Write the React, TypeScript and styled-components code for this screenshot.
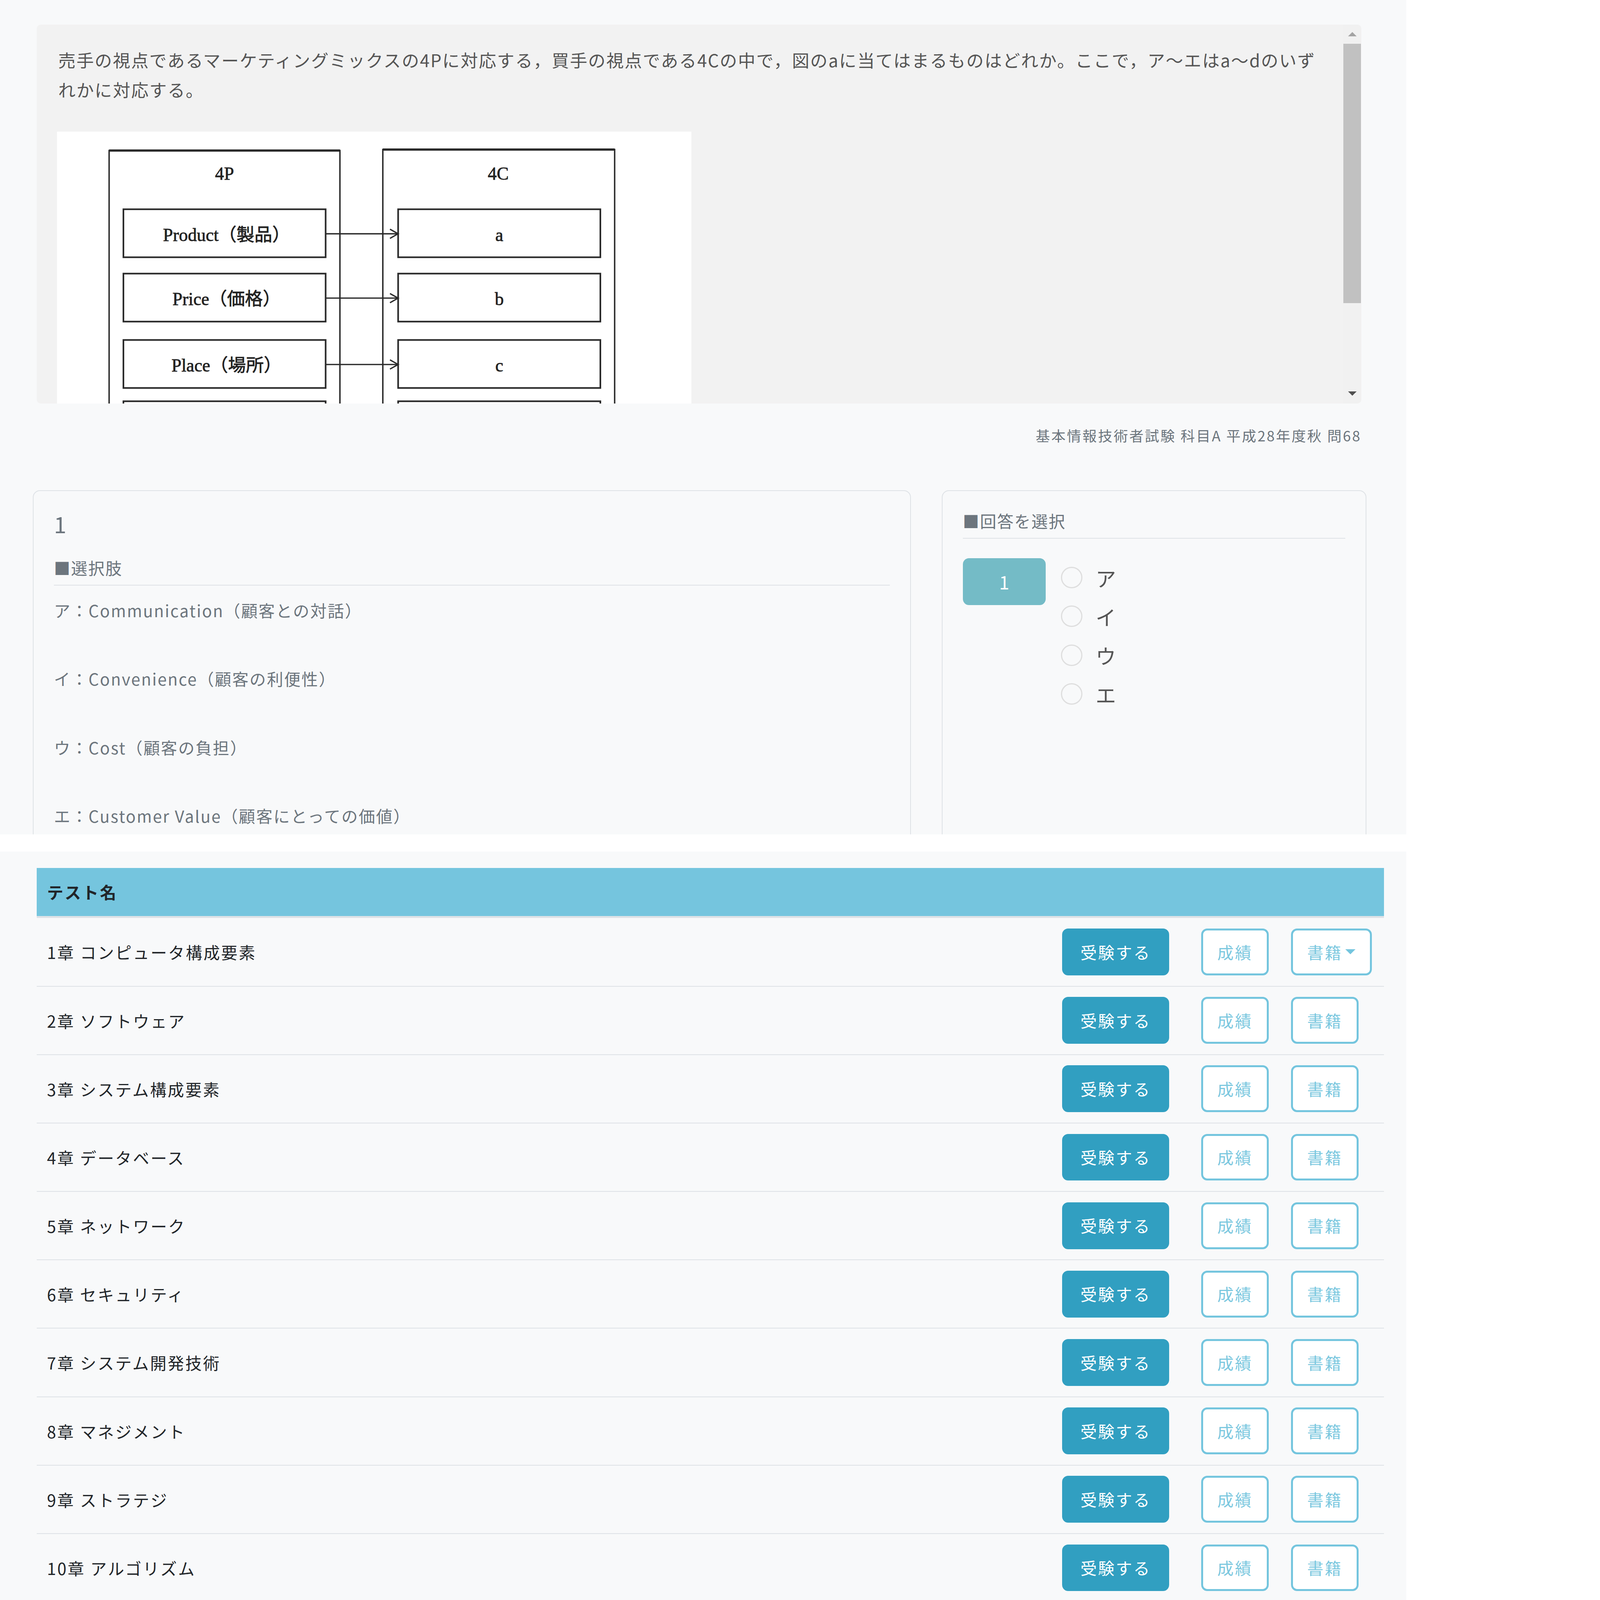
import React from 'react'
import styled, { createGlobalStyle } from 'styled-components'

const GlobalStyle = createGlobalStyle`
  html, body {
    margin: 0;
    padding: 0;
    background: #fff;
  }
  body {
    font-family: "Noto Sans CJK JP", "Noto Sans", sans-serif;
  }
  * {
    box-sizing: border-box;
  }
`

// the frame is photographed at a high pixel ratio; lay out in 1377px-wide units
const Page = styled.div`
  zoom: 2.6145;
  width: 1377px;
  height: 1569px;
  overflow: hidden;
  background: #fff;
  letter-spacing: 0.08em;
`

// ---- question area ----

const QuestionSection = styled.section`
  height: 817px;
  overflow: hidden;
  background: #f8f9fa;
  padding: 24px 0 0 36px;
`

const QuestionBox = styled.div`
  display: flex;
  width: 1297px;
  height: 371px;
  background: #f2f2f2;
  border-radius: 4px;
  overflow: hidden;
`

const QuestionBody = styled.div`
  flex: 1;
  overflow: hidden;
  padding: 20px 20px 0 21px;
`

const QuestionText = styled.p`
  margin: 0 0 27px;
  font-size: 17px;
  line-height: 29px;
  letter-spacing: 0.05em;
  color: #555;
`

const Figure = styled.div`
  width: 621px;
  height: 340px;
  margin-left: -1px;
  background: #fff;
  letter-spacing: 0;
`

const ScrollTrack = styled.div`
  width: 18px;
  display: flex;
  flex-direction: column;
  align-items: center;
  background: #f1f1f1;
`

const ScrollButton = styled.div`
  height: 19px;
  width: 100%;
  display: flex;
  align-items: center;
  justify-content: center;
`

const Triangle = styled.span<{ $dir: 'up' | 'down' }>`
  width: 0;
  height: 0;
  border-left: 4.5px solid transparent;
  border-right: 4.5px solid transparent;
  ${(p) =>
    p.$dir === 'up'
      ? 'border-bottom: 4.5px solid #a3a3a3;'
      : 'border-top: 4.5px solid #505050;'}
`

const ScrollThumb = styled.div`
  width: 17px;
  height: 254px;
  background: #c1c1c1;
`

const ScrollSpacer = styled.div`
  flex: 1;
`

const Source = styled.p`
  margin: 21px 0 0;
  width: 1297px;
  text-align: right;
  font-size: 14px;
  line-height: 21px;
  color: #6c757d;
`

const CardRow = styled.div`
  display: flex;
  gap: 30px;
  margin: 43px 0 0 -4px;
`

const Card = styled.div<{ $width: number }>`
  width: ${(p) => p.$width}px;
  height: 420px;
  border: 1px solid #dee2e6;
  border-radius: 7px;
  padding: 16px 20px;
  color: #6c757d;
`

const QuestionNo = styled.div`
  font-size: 22px;
  line-height: 32px;
`

const CardTitle = styled.div<{ $gap?: number }>`
  margin-top: ${(p) => p.$gap ?? 0}px;
  font-size: 16px;
  line-height: 26px;
  padding-bottom: 4px;
  border-bottom: 1px solid #dee2e6;
  letter-spacing: 0.05em;
`

const Choices = styled.div`
  margin-top: 11px;
`

const Choice = styled.p`
  margin: 0 0 41px;
  font-size: 16px;
  line-height: 26px;
  letter-spacing: 0.06em;
`

const AnswerArea = styled.div`
  display: flex;
  align-items: flex-start;
  margin-top: 19px;
`

const AnswerNo = styled.div`
  width: 81px;
  height: 46px;
  border-radius: 6px;
  background: #74bbc6;
  color: #fff;
  font-size: 18px;
  display: flex;
  align-items: center;
  justify-content: center;
  letter-spacing: 0;
`

const RadioList = styled.div`
  margin-left: 15px;
  display: flex;
  flex-direction: column;
`

const RadioItem = styled.label`
  height: 38px;
  display: flex;
  align-items: center;
`

const RadioCircle = styled.span`
  width: 21px;
  height: 21px;
  border-radius: 50%;
  border: 1.5px solid #dedede;
`

const RadioLabel = styled.span`
  margin-left: 13px;
  font-size: 20px;
  color: #555;
`

// ---- test list ----

const Divider = styled.div`
  height: 17px;
  background: #fff;
`

const ListSection = styled.section`
  height: 735px;
  overflow: hidden;
  background: #f8f9fa;
  padding: 16px 0 0 36px;
`

const Table = styled.div`
  width: 1319px;
`

const HeadRow = styled.div`
  height: 49px;
  padding-left: 10px;
  background: #75c5de;
  border-bottom: 2px solid #dee2e6;
  font-size: 16px;
  font-weight: 700;
  line-height: 47px;
  color: #212529;
`

const Row = styled.div`
  display: grid;
  grid-template-columns: 1fr 136px 88px 101px;
  align-items: center;
  height: 67px;
  border-bottom: 1px solid #dee2e6;
`

const Cell = styled.div`
  padding-left: 10px;
  font-size: 16px;
  color: #212529;
`

const Button = styled.button<{ $variant: 'solid' | 'outline' }>`
  font-family: inherit;
  font-size: 16px;
  line-height: 24px;
  letter-spacing: 0.08em;
  border-radius: 6px;
  cursor: pointer;
  display: inline-flex;
  align-items: center;
  ${(p) =>
    p.$variant === 'solid'
      ? `
    padding: 9px 16px;
    background: #319fc1;
    border: 2px solid #319fc1;
    color: #fff;
  `
      : `
    padding: 9px 14px;
    background: #fff;
    border: 2px solid #74c5de;
    color: #7cc8df;
  `}
`

const Caret = styled.span`
  display: inline-block;
  margin-left: 3px;
  width: 0;
  height: 0;
  border-top: 5px solid #74c5de;
  border-left: 5px solid transparent;
  border-right: 5px solid transparent;
`

// only the first three rows of the figure are in view; the fourth shows its top edge
const rows4P = [
  ['Product（製品）', 'a'],
  ['Price（価格）', 'b'],
  ['Place（場所）', 'c'],
]

const rowTops = [76, 139, 204, 264]

const Diagram = () => (
  <svg width="621" height="340" viewBox="0 0 621 340">
    <g fill="none" stroke="#2a2a2a">
      <rect x="51" y="18.5" width="226" height="400" strokeWidth="1.4" />
      <rect x="319" y="17.5" width="227" height="400" strokeWidth="1.4" />
      <line x1="51" y1="18.5" x2="277" y2="18.5" strokeWidth="2.2" />
      <line x1="319" y1="17.5" x2="546" y2="17.5" strokeWidth="2.2" />
      {rowTops.map((top) => (
        <g key={top}>
          <rect x="65" y={top} width="198" height="47" strokeWidth="1.6" />
          <rect x="334" y={top} width="198" height="47" strokeWidth="1.6" />
          <line x1="263" y1={top + 24} x2="333" y2={top + 24} strokeWidth="1.3" />
          <path d={`M326 ${top + 19.5} L334 ${top + 24} L326 ${top + 28.5}`} strokeWidth="1.3" />
        </g>
      ))}
    </g>
    <g
      fill="#222"
      stroke="#222"
      strokeWidth="0.35"
      fontFamily='"Liberation Serif", "Noto Sans CJK JP", serif'
      fontSize="17.5"
      textAnchor="middle"
      dominantBaseline="central"
    >
      <text x="164" y="41">4P</text>
      <text x="432" y="41">4C</text>
      {rows4P.map(([p, c], i) => (
        <g key={p}>
          <text x="166" y={rowTops[i] + 25}>{p}</text>
          <text x="433" y={rowTops[i] + 25}>{c}</text>
        </g>
      ))}
    </g>
  </svg>
)

const choices = [
  'ア：Communication（顧客との対話）',
  'イ：Convenience（顧客の利便性）',
  'ウ：Cost（顧客の負担）',
  'エ：Customer Value（顧客にとっての価値）',
]

const tests = [
  '1章 コンピュータ構成要素',
  '2章 ソフトウェア',
  '3章 システム構成要素',
  '4章 データベース',
  '5章 ネットワーク',
  '6章 セキュリティ',
  '7章 システム開発技術',
  '8章 マネジメント',
  '9章 ストラテジ',
  '10章 アルゴリズム',
]

const App = () => (
  <>
    <GlobalStyle />
    <Page>
      <QuestionSection>
        <QuestionBox>
          <QuestionBody>
            <QuestionText>
              売手の視点であるマーケティングミックスの4Pに対応する，買手の視点である4Cの中で，図のaに当てはまるものはどれか。ここで，ア～エはa～dのいずれかに対応する。
            </QuestionText>
            <Figure>
              <Diagram />
            </Figure>
          </QuestionBody>
          <ScrollTrack>
            <ScrollButton>
              <Triangle $dir="up" />
            </ScrollButton>
            <ScrollThumb />
            <ScrollSpacer />
            <ScrollButton>
              <Triangle $dir="down" />
            </ScrollButton>
          </ScrollTrack>
        </QuestionBox>
        <Source>基本情報技術者試験 科目A 平成28年度秋 問68</Source>
        <CardRow>
          <Card $width={860}>
            <QuestionNo>1</QuestionNo>
            <CardTitle $gap={14}>■選択肢</CardTitle>
            <Choices>
              {choices.map((c) => (
                <Choice key={c}>{c}</Choice>
              ))}
            </Choices>
          </Card>
          <Card $width={416}>
            <CardTitle>■回答を選択</CardTitle>
            <AnswerArea>
              <AnswerNo>1</AnswerNo>
              <RadioList>
                {['ア', 'イ', 'ウ', 'エ'].map((k) => (
                  <RadioItem key={k}>
                    <RadioCircle />
                    <RadioLabel>{k}</RadioLabel>
                  </RadioItem>
                ))}
              </RadioList>
            </AnswerArea>
          </Card>
        </CardRow>
      </QuestionSection>
      <Divider />
      <ListSection>
        <Table>
          <HeadRow>テスト名</HeadRow>
          {tests.map((name, i) => (
            <Row key={name}>
              <Cell>{name}</Cell>
              <Cell>
                <Button $variant="solid">受験する</Button>
              </Cell>
              <Cell>
                <Button $variant="outline">成績</Button>
              </Cell>
              <Cell>
                <Button $variant="outline">
                  書籍
                  {i === 0 && <Caret />}
                </Button>
              </Cell>
            </Row>
          ))}
        </Table>
      </ListSection>
    </Page>
  </>
)

export default App
